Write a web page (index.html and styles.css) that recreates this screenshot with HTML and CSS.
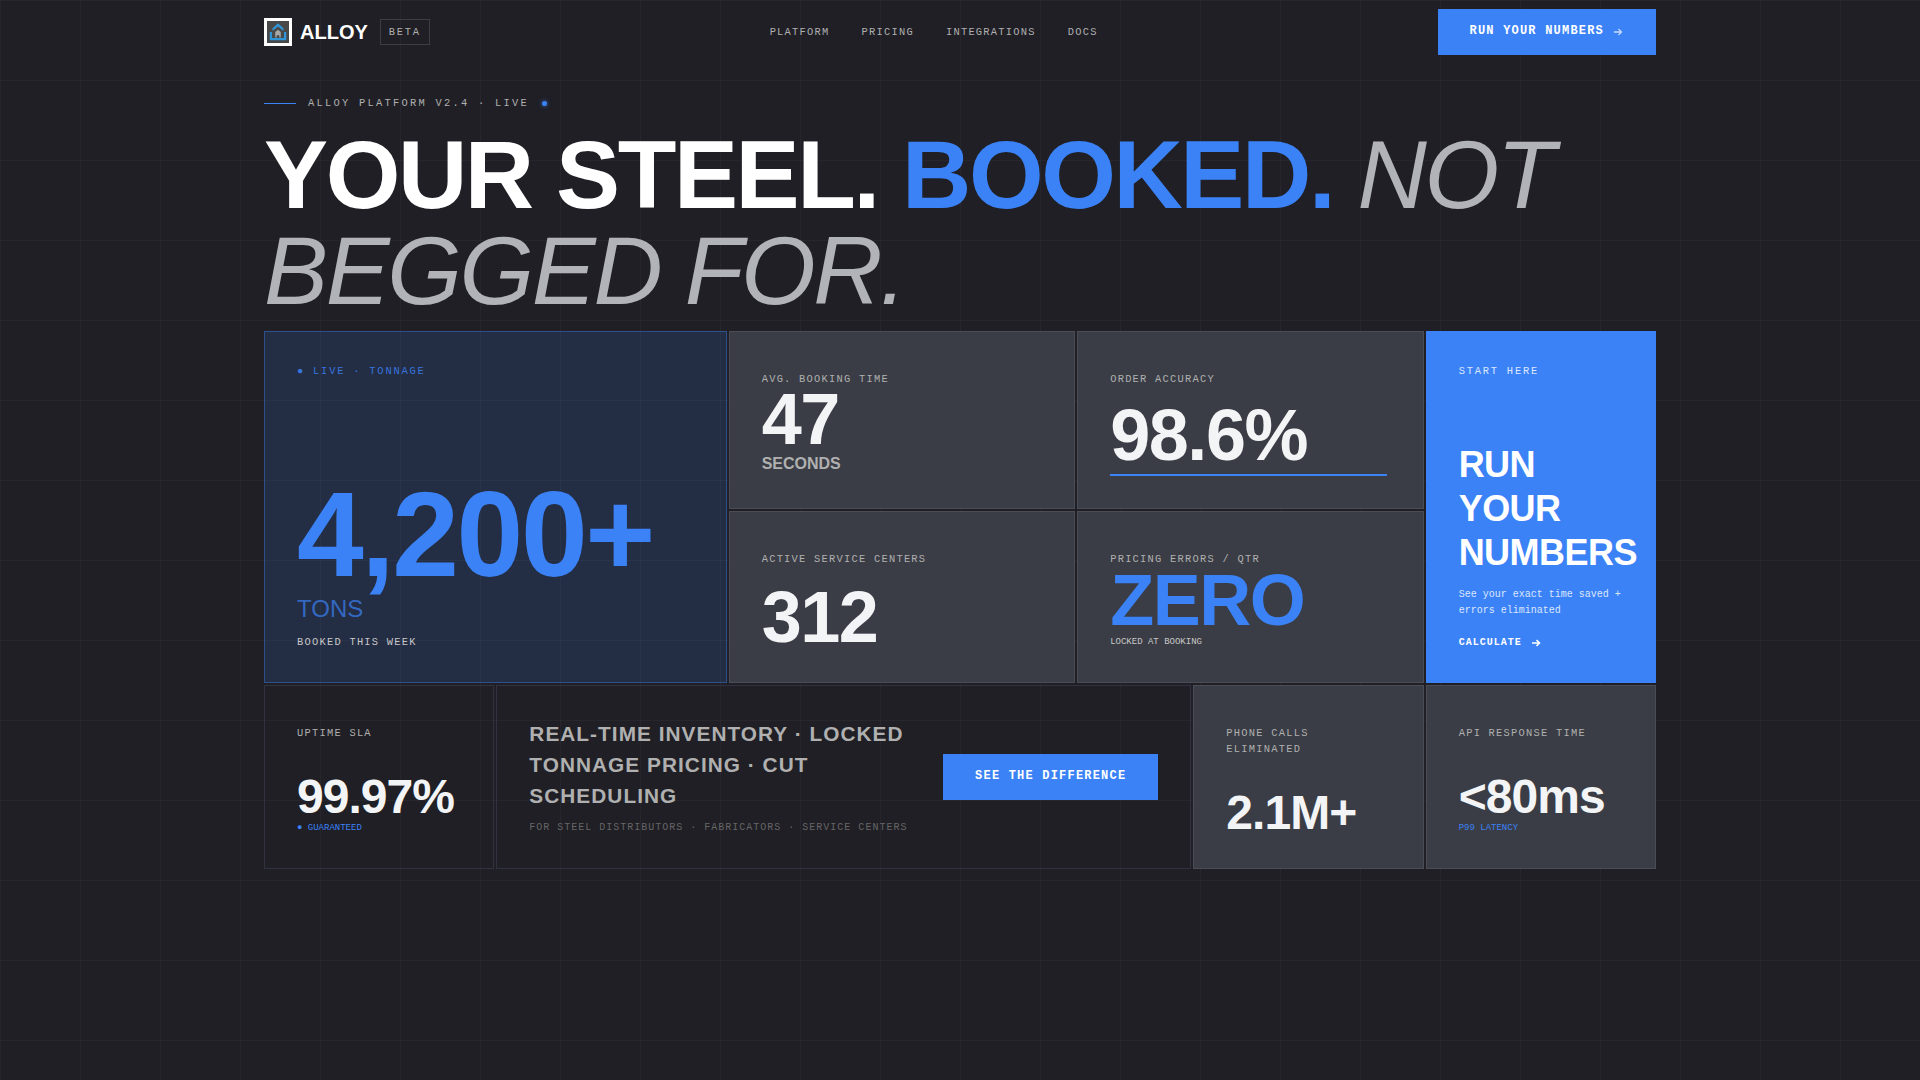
FILE: index.html
```html
<!DOCTYPE html>
<html lang="en">
<head>
    <meta charset="UTF-8">
    <meta name="viewport" content="width=device-width, initial-scale=1.0">
    <title>Alloy - Steel booking platform</title>
    <link rel="stylesheet" href="styles.css">
</head>
<body>
    <div class="container">
        <nav class="nav">
            <div class="brand">
                <span class="logo">
                    <svg viewBox="0 0 24 24" width="22" height="22">
                        <rect width="24" height="24" fill="#484848"/>
                        <path d="M12 2.500 18 8V11l-6-5-6 5V8z" fill="#2f95d6"/>
                        <path d="M9 18v-6l3-2.500 3 2.500v6h-1.600v-2.500h-2.800V18z" fill="#a8a8a8"/>
                        <path d="M3 12v9h18v-9h-2.500v6.500h-13V12z" fill="#2f95d6"/>
                    </svg>
                </span>
                <span class="brand-name">ALLOY</span>
                <span class="beta">BETA</span>
            </div>
            <div class="nav-links">
                <a href="#">PLATFORM</a>
                <a href="#">PRICING</a>
                <a href="#">INTEGRATIONS</a>
                <a href="#">DOCS</a>
            </div>
            <a href="#" class="btn">
                RUN YOUR NUMBERS
                <svg class="arrow" viewBox="0 0 12 12" width="12" height="12"><path d="M2 6h7.500M6.500 3 9.500 6 6.500 9" fill="none" stroke="currentColor" stroke-width="1.300"/></svg>
            </a>
        </nav>

        <div class="eyebrow">
            <span class="eyebrow-line"></span>
            <span>ALLOY PLATFORM V2.4 · LIVE</span>
            <span class="live-dot"></span>
        </div>

        <h1 class="headline">YOUR STEEL. <span class="accent">BOOKED.</span> <em>NOT BEGGED FOR.</em></h1>

        <div class="top-grid">
            <section class="card hero-card">
                <div class="small-label accent">● LIVE · TONNAGE</div>
                <div>
                    <div class="hero-value">4,200+</div>
                    <div class="hero-unit">TONS</div>
                    <div class="hero-note">BOOKED THIS WEEK</div>
                </div>
            </section>

            <div class="stat-grid">
                <section class="card stat">
                    <div class="label">AVG. BOOKING TIME</div>
                    <div class="value lead">47</div>
                    <div class="value-unit">SECONDS</div>
                </section>
                <section class="card stat">
                    <div class="label">ORDER ACCURACY</div>
                    <div class="value push">98.6%</div>
                    <div class="value-bar"></div>
                </section>
                <section class="card stat">
                    <div class="label">ACTIVE SERVICE CENTERS</div>
                    <div class="value push">312</div>
                </section>
                <section class="card stat">
                    <div class="label">PRICING ERRORS / QTR</div>
                    <div class="value accent">ZERO</div>
                    <div class="tiny">LOCKED AT BOOKING</div>
                </section>
            </div>

            <section class="card cta-card">
                <div class="small-label">START HERE</div>
                <div>
                    <h2 class="cta-title">RUN YOUR NUMBERS</h2>
                    <p class="cta-text">See your exact time saved + errors eliminated</p>
                    <a href="#" class="cta-link">
                        CALCULATE
                        <svg class="arrow" viewBox="0 0 12 12" width="12" height="12"><path d="M2 6h7.500M6.500 3 9.500 6 6.500 9" fill="none" stroke="currentColor" stroke-width="1.600"/></svg>
                    </a>
                </div>
            </section>
        </div>

        <div class="bottom-grid">
            <section class="card small dark">
                <div class="label">UPTIME SLA</div>
                <div class="small-value">99.97%</div>
                <div class="tiny accent">● GUARANTEED</div>
            </section>

            <section class="card dark promo">
                <div class="promo-copy">
                    <div class="promo-title">REAL-TIME INVENTORY · LOCKED TONNAGE PRICING · CUT SCHEDULING</div>
                    <div class="promo-sub">FOR STEEL DISTRIBUTORS · FABRICATORS · SERVICE CENTERS</div>
                </div>
                <a href="#" class="btn">SEE THE DIFFERENCE</a>
            </section>

            <section class="card small">
                <div class="label">PHONE CALLS ELIMINATED</div>
                <div class="small-value">2.1M+</div>
            </section>

            <section class="card small">
                <div class="label">API RESPONSE TIME</div>
                <div class="small-value">&lt;80ms</div>
                <div class="tiny accent">P99 LATENCY</div>
            </section>
        </div>
    </div>
</body>
</html>
```

FILE: styles.css
```css
* {
    box-sizing: border-box;
}
body {
    margin: 0;
    min-height: 1080px;
    font-family: "Liberation Sans", Arial, sans-serif;
    line-height: 1.6;
    color: #f3f4f6;
    background-color: #1f1f25;
    background-image:
        linear-gradient(rgba(255,255,255,0.03) 1px, transparent 1px),
        linear-gradient(90deg, rgba(255,255,255,0.03) 1px, transparent 1px);
    background-size: 80px 80px;
}
a {
    color: inherit;
    text-decoration: none;
}
.container {
    width: 1392px;
    margin: 0 auto;
}
.accent {
    color: #3b82f6;
}

/* nav */
.nav {
    display: flex;
    justify-content: space-between;
    align-items: center;
    height: 64px;
}
.brand {
    display: flex;
    align-items: center;
}
.logo {
    display: block;
    width: 28px;
    height: 28px;
    border: 3px solid #fff;
}
.logo svg {
    display: block;
}
.brand-name {
    margin-left: 8px;
    font-size: 20px;
    font-weight: 700;
    line-height: 1;
    color: #fff;
}
.beta {
    margin-left: 12px;
    padding: 4px 8px;
    border: 1px solid #3a3d45;
    font-family: "Liberation Mono", monospace;
    font-size: 10.4px;
    letter-spacing: 1.76px;
    color: #b0b0b0;
}
.nav-links {
    display: flex;
    gap: 32px;
    font-family: "Liberation Mono", monospace;
    font-size: 10.4px;
    letter-spacing: 1.25px;
    color: #b0b0b0;
}
.btn {
    display: inline-flex;
    align-items: center;
    flex-shrink: 0;
    gap: 8px;
    height: 46px;
    padding: 0 32px;
    background-color: #3b82f6;
    font-family: "Liberation Mono", monospace;
    font-size: 12px;
    font-weight: 700;
    letter-spacing: 1.2px;
    color: #fff;
}
.btn .arrow {
    opacity: 0.7;
}

/* headline */
.eyebrow {
    display: flex;
    align-items: center;
    margin-top: 31px;
    font-family: "Liberation Mono", monospace;
    font-size: 10.4px;
    line-height: 16px;
    letter-spacing: 2.26px;
    color: #b0b0b0;
}
.eyebrow-line {
    width: 32px;
    height: 1px;
    margin-right: 12px;
    background-color: #3b82f6;
}
.live-dot {
    width: 5px;
    height: 5px;
    margin-left: 13px;
    border-radius: 50%;
    background-color: #3b82f6;
    box-shadow: 0 0 4px rgba(59,130,246,0.8);
}
.headline {
    margin: 16px 0 12px;
    font-size: 96px;
    font-weight: 700;
    line-height: 1;
    letter-spacing: -2.4px;
    color: #fff;
}
.headline em {
    font-weight: 400;
    color: #b2b3b8;
}

/* cards */
.top-grid {
    display: grid;
    grid-template-columns: repeat(6, 1fr);
    grid-template-rows: 352px;
    gap: 2px;
}
.bottom-grid {
    display: grid;
    grid-template-columns: repeat(6, 1fr);
    gap: 2px;
    margin-top: 2px;
}
.card {
    display: flex;
    flex-direction: column;
    min-width: 0;
    padding: 32px;
    border: 1px solid #4a4d55;
    background-color: #3a3d45;
}
.dark {
    border-color: #30333f;
    background-color: transparent;
}
.label,
.small-label {
    font-family: "Liberation Mono", monospace;
    font-size: 10.4px;
    line-height: 16px;
    letter-spacing: 1.25px;
    color: #b0b0b0;
}
.small-label {
    letter-spacing: 1.8px;
}
.small-label.accent {
    color: #3b82f6;
    opacity: 0.85;
}
.tiny {
    font-family: "Liberation Mono", monospace;
    font-size: 9px;
    color: #c8c8c8;
}
.tiny.accent {
    color: #3b82f6;
}

.hero-card {
    grid-column: span 2;
    justify-content: space-between;
    padding-top: 31px;
    padding-bottom: 31px;
    border-color: rgba(59,130,246,0.4);
    background-color: rgba(59,130,246,0.15);
}
.hero-value {
    margin-bottom: 2px;
    font-size: 120px;
    font-weight: 700;
    line-height: 0.9;
    letter-spacing: -2.4px;
    color: #3b82f6;
}
.hero-unit {
    font-size: 24px;
    color: #3b82f6;
    opacity: 0.7;
}
.hero-note {
    margin-top: 6px;
    font-family: "Liberation Mono", monospace;
    font-size: 10.4px;
    letter-spacing: 1.25px;
    color: #c8c8c8;
}

.stat-grid {
    grid-column: span 3;
    display: grid;
    grid-template-columns: 1fr 1fr;
    grid-template-rows: 178px 172px;
    gap: 2px;
    min-width: 0;
}
.stat {
    padding-top: 39px;
    padding-bottom: 31px;
}
.value {
    margin-top: -1.5px;
    font-size: 72px;
    font-weight: 700;
    line-height: 0.95;
    letter-spacing: -1.44px;
}
.lead {
    margin-top: -2.5px;
}
.push {
    margin-top: auto;
}
.value-unit {
    margin-top: 1px;
    font-size: 16px;
    font-weight: 700;
    line-height: 1.2;
    color: #b0b0b0;
}
.value-bar {
    width: 277px;
    height: 2px;
    margin-top: 5px;
    margin-bottom: 1px;
    background-color: #3b82f6;
}
.stat .tiny {
    margin-top: 1px;
}

.cta-card {
    justify-content: space-between;
    border: none;
    padding: 32px 32px 32px 33px;
    background-color: #3b82f6;
}
.cta-card .small-label {
    color: #dbe7fd;
}
.cta-title {
    margin: 0 0 12px;
    font-size: 36px;
    font-weight: 700;
    line-height: 44px;
    letter-spacing: -0.54px;
    color: #fff;
}
.cta-text {
    margin: 0 0 16px;
    font-family: "Liberation Mono", monospace;
    font-size: 10px;
    color: #dbe7fd;
}
.cta-link {
    display: flex;
    align-items: center;
    gap: 8px;
    font-family: "Liberation Mono", monospace;
    font-size: 10px;
    font-weight: 700;
    letter-spacing: 1px;
    color: #fff;
}

.small {
    padding-top: 39px;
    padding-bottom: 29px;
}
.small .label {
    margin-bottom: 31.5px;
}
.small-value {
    font-size: 48px;
    font-weight: 700;
    line-height: 1;
    letter-spacing: -0.96px;
}
.promo {
    grid-column: span 3;
    flex-direction: row;
    align-items: center;
    gap: 32px;
}
.promo-copy {
    flex: 1;
}
.promo-title {
    font-size: 20.8px;
    font-weight: 700;
    line-height: 1.5;
    letter-spacing: 1.04px;
    color: #b0b0b0;
}
.promo-sub {
    margin-top: 8px;
    font-family: "Liberation Mono", monospace;
    font-size: 10px;
    letter-spacing: 1px;
    color: #666;
}
```
